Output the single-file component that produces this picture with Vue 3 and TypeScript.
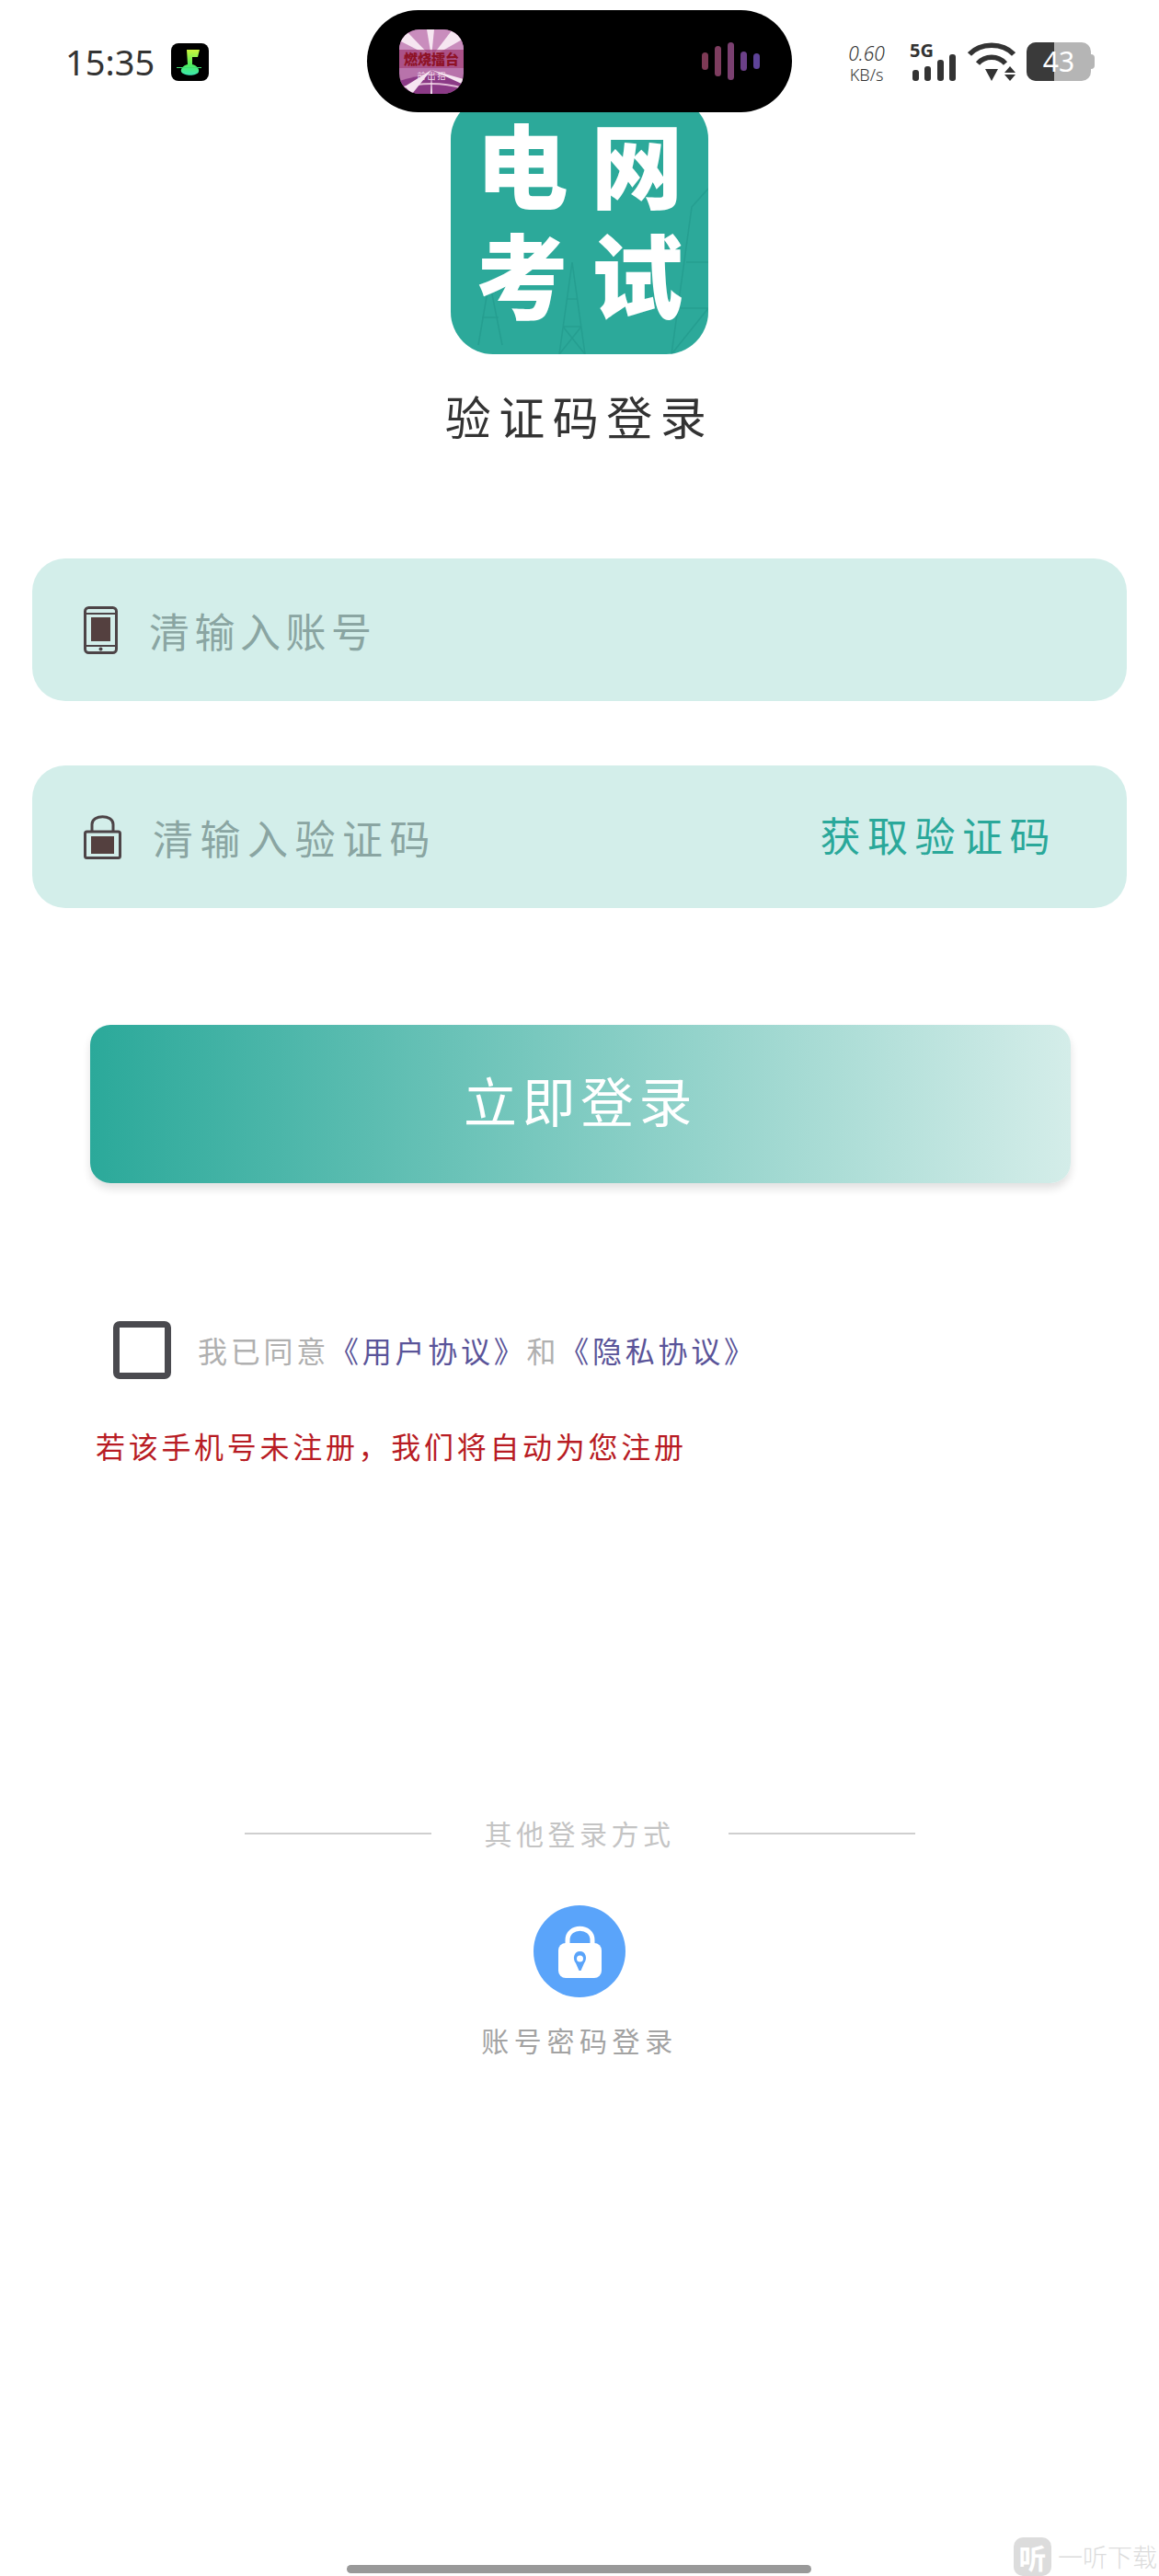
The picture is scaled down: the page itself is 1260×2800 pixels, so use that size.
<script setup lang="ts">
import { ref } from 'vue'

const account = ref('')
const code = ref('')
const agreed = ref(false)

const waveBars = [
  { x: 0, y: 11, h: 19, color: '#7d3a55' },
  { x: 14, y: 4, h: 33, color: '#7d3d5f' },
  { x: 28, y: 0, h: 41, color: '#7a4070' },
  { x: 42, y: 10, h: 21, color: '#6c4088' },
  { x: 56, y: 12, h: 17, color: '#5e4398' },
]

const signalBars = [
  { x: 0, y: 17, h: 12 },
  { x: 13, y: 13, h: 16 },
  { x: 27, y: 6, h: 23 },
  { x: 40, y: 0, h: 29 },
]

const rays = [
  'M35 30 L0 12 L8 2 Z',
  'M35 30 L30 0 L38 0 Z',
  'M35 30 L58 0 L70 10 Z',
  'M35 44 L14 70 L6 62 Z',
  'M35 44 L34 70 L36 70 Z',
  'M35 44 L70 54 L70 60 Z',
]
</script>

<template>
  <div class="page">
    <div class="island">
      <svg class="album" width="70" height="70" viewBox="0 0 70 70">
        <defs>
          <clipPath id="albumClip"><rect width="70" height="70" rx="22" /></clipPath>
        </defs>
        <g clip-path="url(#albumClip)">
          <rect width="70" height="70" fill="#b873ab" />
          <rect width="70" height="22" fill="#c98dbd" />
          <path d="M0 56 Q35 44 70 56 L70 70 L0 70 Z" fill="#8b3a86" />
          <path d="M0 64 Q35 54 70 64" fill="none" stroke="#e3bcd8" stroke-width="2" />
          <path v-for="ray in rays" :key="ray" :d="ray" fill="#f6e6f1" />
          <rect y="22" width="70" height="20" fill="#a8487f" opacity="0.8" />
          <text x="35" y="38" class="album-title" text-anchor="middle">燃烧擂台</text>
          <text x="35" y="54" class="album-sub" text-anchor="middle">前 出 招</text>
        </g>
      </svg>
      <svg class="wave" width="63" height="41" viewBox="0 0 63 41">
        <rect
          v-for="bar in waveBars"
          :key="bar.x"
          :x="bar.x"
          :y="bar.y"
          width="7"
          :height="bar.h"
          rx="3.5"
          :fill="bar.color"
        />
      </svg>
    </div>

    <header class="status-bar">
      <div class="status-left">
        <span class="time">15:35</span>
        <svg class="music-app" width="41" height="41" viewBox="0 0 41 41">
          <defs>
            <linearGradient id="noteFill" x1="0" y1="0" x2="0" y2="1">
              <stop offset="0" stop-color="#cdf53c" />
              <stop offset="0.6" stop-color="#4eee5e" />
              <stop offset="1" stop-color="#3ce6b4" />
            </linearGradient>
          </defs>
          <rect width="41" height="41" rx="8" fill="#000" />
          <path
            d="M17 7 H31 L29 15 H23 V23 C28 24 31 28 30 31 C28 36 14 36 11 31 C10 28 13 24 18 23 Z"
            fill="url(#noteFill)"
          />
          <path d="M6 26.5 H33" stroke="#3fdc70" stroke-width="1" />
        </svg>
      </div>
      <div class="status-right">
        <div class="net-speed">
          <span class="net-value">0.60</span>
          <span class="net-unit">KB/s</span>
        </div>
        <div class="signal">
          <span class="signal-label">5G</span>
          <svg width="47" height="29" viewBox="0 0 47 29">
            <rect
              v-for="bar in signalBars"
              :key="bar.x"
              :x="bar.x"
              :y="bar.y"
              width="7"
              :height="bar.h"
              rx="3"
              fill="#333"
            />
          </svg>
        </div>
        <svg class="wifi" width="52" height="43" viewBox="0 0 52 43">
          <path d="M2 13 C14 0 38 0 50 13" fill="none" stroke="#333" stroke-width="5.5" />
          <path d="M11 23 C19 14 33 14 41 23" fill="none" stroke="#333" stroke-width="5.5" />
          <path d="M19 29 H33 L26 42 Z" fill="#333" />
          <path d="M46 26 L52 33 H40 Z M40 35 H52 L46 42 Z" fill="#333" />
        </svg>
        <div class="battery">
          <div class="battery-body">
            <div class="battery-fill"></div>
            <span class="battery-num">43</span>
          </div>
          <div class="battery-cap"></div>
        </div>
      </div>
    </header>

    <div class="logo">
      <svg class="logo-towers" width="280" height="280" viewBox="0 0 280 280">
        <g fill="none" stroke="#239a8d" stroke-width="1.5">
          <path d="M118 280 L132 180 L146 280 M122 250 H142 M126 220 H138 M118 280 L142 250 M146 280 L122 250" />
          <path d="M30 270 L42 200 L56 270 M34 240 H52" />
          <path d="M240 280 L262 120 L280 100 M248 230 H280 M256 180 H280 M240 280 L280 230" />
        </g>
      </svg>
      <div class="logo-text">
        <span>电</span><span>网</span><span>考</span><span>试</span>
      </div>
    </div>

    <h1 class="title">验证码登录</h1>

    <form class="form" @submit.prevent>
      <label class="field">
        <svg class="field-icon" width="37" height="52" viewBox="0 0 37 52">
          <rect x="1.5" y="1.5" width="34" height="49" rx="4" fill="none" stroke="#4d4447" stroke-width="3" />
          <path d="M2 8 H35 M2 43 H35" stroke="#4d4447" stroke-width="2" />
          <rect x="8" y="12" width="21" height="26" fill="#54403f" />
          <circle cx="18.5" cy="46.5" r="2" fill="#4d4447" />
        </svg>
        <input v-model="account" class="field-input" type="text" placeholder="清输入账号" />
      </label>

      <label class="field field-code">
        <svg class="field-icon" width="41" height="48" viewBox="0 0 41 48">
          <path d="M9 18 V10 C9 -1 32 -1 32 10 V18" fill="none" stroke="#4d4447" stroke-width="3" />
          <rect x="1.5" y="18" width="38" height="28.5" rx="2" fill="none" stroke="#4d4447" stroke-width="3" />
          <rect x="8" y="23" width="25" height="19" fill="#54403f" />
        </svg>
        <input v-model="code" class="field-input" type="text" placeholder="清输入验证码" />
        <span class="get-code">获取验证码</span>
      </label>

      <button class="submit" type="button">立即登录</button>
    </form>

    <div class="agreement">
      <span class="checkbox" :class="{ checked: agreed }" @click="agreed = !agreed"></span>
      <p class="agreement-text">我已同意<a>《用户协议》</a>和<a>《隐私协议》</a></p>
    </div>
    <p class="notice">若该手机号未注册，我们将自动为您注册</p>

    <div class="other-title">
      <span class="other-line"></span>
      <span class="other-label">其他登录方式</span>
      <span class="other-line"></span>
    </div>
    <div class="other-method">
      <div class="other-icon">
        <svg width="47" height="57" viewBox="0 0 47 57">
          <path d="M10 24 V16 C10 -1 37 -1 37 16 V24" fill="none" stroke="#fff" stroke-width="5" />
          <rect y="19" width="47" height="38" rx="8" fill="#fff" />
          <path d="M23.5 28 C30 28 32 36 28 41 L24.5 49 H22.5 L19 41 C15 36 17 28 23.5 28 Z" fill="#5aa4fa" />
          <circle cx="23.5" cy="36" r="3.5" fill="#fff" />
        </svg>
      </div>
      <span class="other-name">账号密码登录</span>
    </div>

    <div class="home-bar"></div>
    <div class="watermark">
      <span class="watermark-icon">听</span>
      <span class="watermark-text">一听下载</span>
    </div>
  </div>
</template>

<style>
html,
body {
  margin: 0;
  background: #fff;
}
</style>

<style scoped>
.page {
  position: relative;
  width: 1260px;
  height: 2800px;
  overflow: hidden;
  background: #fff;
  display: flex;
  flex-direction: column;
  font-family: "Noto Sans CJK SC", "Noto Sans", sans-serif;
}

.island {
  position: absolute;
  top: 11px;
  left: 399px;
  width: 462px;
  height: 111px;
  box-sizing: border-box;
  padding: 0 35px 0 35px;
  border-radius: 56px;
  background: #000;
  display: flex;
  align-items: center;
  justify-content: space-between;
  z-index: 2;
}

.album-title {
  font-size: 15px;
  font-weight: 900;
  fill: #8e1226;
}

.album-sub {
  font-size: 9px;
  fill: #f3dceb;
}

.status-bar {
  height: 105px;
  box-sizing: border-box;
  padding: 46px 70px 0 71px;
  display: flex;
  justify-content: space-between;
  align-items: flex-start;
}

.status-left {
  display: flex;
  align-items: center;
  gap: 18px;
  height: 42px;
}

.time {
  width: 97px;
  font-family: "Noto Sans", sans-serif;
  font-size: 38px;
  line-height: 42px;
  color: #333;
}

.status-right {
  display: flex;
  align-items: flex-start;
  height: 43px;
}

.net-speed {
  width: 44px;
  margin-right: 25px;
  display: flex;
  flex-direction: column;
  align-items: center;
  font-family: "Noto Sans", sans-serif;
  color: #333;
}

.net-value {
  font-size: 21px;
  line-height: 24px;
  font-style: italic;
  font-weight: 300;
}

.net-unit {
  font-size: 18px;
  line-height: 22px;
  font-weight: 300;
}

.signal {
  position: relative;
  width: 47px;
  height: 43px;
  margin-right: 13px;
  padding-top: 13px;
  box-sizing: border-box;
  margin-left: 3px;
}

.signal svg {
  display: block;
}

.signal-label {
  position: absolute;
  top: -3px;
  left: -3px;
  font-family: "Noto Sans", sans-serif;
  font-size: 20px;
  line-height: 24px;
  font-weight: 700;
  color: #333;
}

.wifi {
  margin-right: 12px;
}

.battery {
  display: flex;
  align-items: center;
  height: 42px;
}

.battery-body {
  position: relative;
  width: 70px;
  height: 42px;
  border-radius: 10px;
  overflow: hidden;
  background: #b5b5b5;
  display: flex;
  align-items: center;
  justify-content: center;
}

.battery-fill {
  position: absolute;
  left: 0;
  top: 0;
  bottom: 0;
  width: 30px;
  background: #3a3a3a;
}

.battery-num {
  position: relative;
  font-family: "Noto Sans", sans-serif;
  font-size: 30px;
  line-height: 42px;
  color: #fff;
}

.battery-cap {
  width: 4px;
  height: 16px;
  border-radius: 0 4px 4px 0;
  background: #b5b5b5;
}

.logo {
  position: relative;
  width: 280px;
  height: 280px;
  margin: 0 auto;
  border-radius: 46px;
  background: #2ca99a;
}

.logo-towers {
  position: absolute;
  inset: 0;
  border-radius: 46px;
  opacity: 0.7;
}

.logo-text {
  position: relative;
  display: grid;
  grid-template-columns: 125px 125px;
  justify-content: center;
  padding-top: 11px;
  font-size: 100px;
  font-weight: 900;
  line-height: 120px;
  text-align: center;
  color: #fff;
}

.title {
  margin: 38px 0 0;
  font-size: 50px;
  line-height: 56px;
  font-weight: 400;
  letter-spacing: 8.5px;
  text-align: center;
  color: #333;
}

.form {
  margin-top: 128px;
  padding: 0 35px;
  display: flex;
  flex-direction: column;
  gap: 70px;
}

.field {
  height: 155px;
  box-sizing: border-box;
  padding: 0 76px 0 56px;
  border-radius: 36px;
  background: #d3eeea;
  display: flex;
  align-items: center;
  gap: 34px;
}

.field-icon {
  flex: none;
}

.field-input {
  flex: 1;
  min-width: 0;
  height: 60px;
  padding: 0;
  border: 0;
  outline: 0;
  background: transparent;
  font-family: inherit;
  font-size: 44px;
  letter-spacing: 5.5px;
  color: #333;
}

.field-code .field-input {
  letter-spacing: 7.5px;
}

.field-input::placeholder {
  color: #8aa5a2;
  opacity: 1;
}

.get-code {
  flex: none;
  margin-bottom: 6px;
  font-size: 44px;
  letter-spacing: 7.5px;
  color: #2aa89a;
}

.submit {
  height: 172px;
  margin: 57px 61px 0 63px;
  padding: 0 0 10px;
  border: 0;
  border-radius: 22px;
  background: linear-gradient(90deg, #2ba99a 0%, #d4ede9 100%);
  box-shadow: 0 6px 10px rgba(0, 0, 0, 0.12);
  font-family: inherit;
  font-size: 58px;
  letter-spacing: 5.5px;
  color: #fff;
}

.agreement {
  margin-top: 150px;
  padding-left: 123px;
  display: flex;
  align-items: center;
  gap: 29px;
}

.agreement-text {
  position: relative;
  top: -1px;
  margin: 0;
  font-size: 32px;
  line-height: 40px;
  letter-spacing: 3.75px;
  color: #b0b0b0;
}

.checkbox {
  width: 63px;
  height: 63px;
  box-sizing: border-box;
  border: 7px solid #4a4a4f;
  border-radius: 7px;
}

.agreement-text a {
  color: #5a5499;
}

.notice {
  margin: 52px 0 0;
  padding-left: 104px;
  font-size: 32px;
  line-height: 40px;
  letter-spacing: 3.7px;
  color: #b81c24;
}

.other-title {
  margin-top: 381px;
  height: 40px;
  display: flex;
  align-items: center;
  justify-content: center;
  gap: 58px;
}

.other-line {
  width: 203px;
  height: 2px;
  margin-top: 2px;
  background: #cfcfcf;
}

.other-label {
  font-size: 30px;
  line-height: 40px;
  letter-spacing: 4.5px;
  color: #c4c4c4;
}

.other-method {
  margin-top: 59px;
  display: flex;
  flex-direction: column;
  align-items: center;
  gap: 26px;
}

.other-icon {
  width: 100px;
  height: 100px;
  border-radius: 50%;
  background: #5aa4fa;
  display: flex;
  align-items: center;
  justify-content: center;
}

.other-name {
  font-size: 30px;
  line-height: 40px;
  letter-spacing: 5.6px;
  color: #a3a3a3;
}

.home-bar {
  position: absolute;
  left: 377px;
  bottom: 3px;
  width: 505px;
  height: 9px;
  border-radius: 5px;
  background: #999;
}

.watermark {
  position: absolute;
  right: 0;
  bottom: 0;
  display: flex;
  align-items: center;
  gap: 7px;
  width: 158px;
}

.watermark-icon {
  width: 41px;
  height: 42px;
  border-radius: 10px;
  background: #dcdcdc;
  font-size: 30px;
  line-height: 42px;
  font-weight: 700;
  text-align: center;
  color: #fff;
}

.watermark-text {
  font-size: 27px;
  line-height: 42px;
  font-weight: 300;
  color: #dcdcdc;
  white-space: nowrap;
}
</style>
